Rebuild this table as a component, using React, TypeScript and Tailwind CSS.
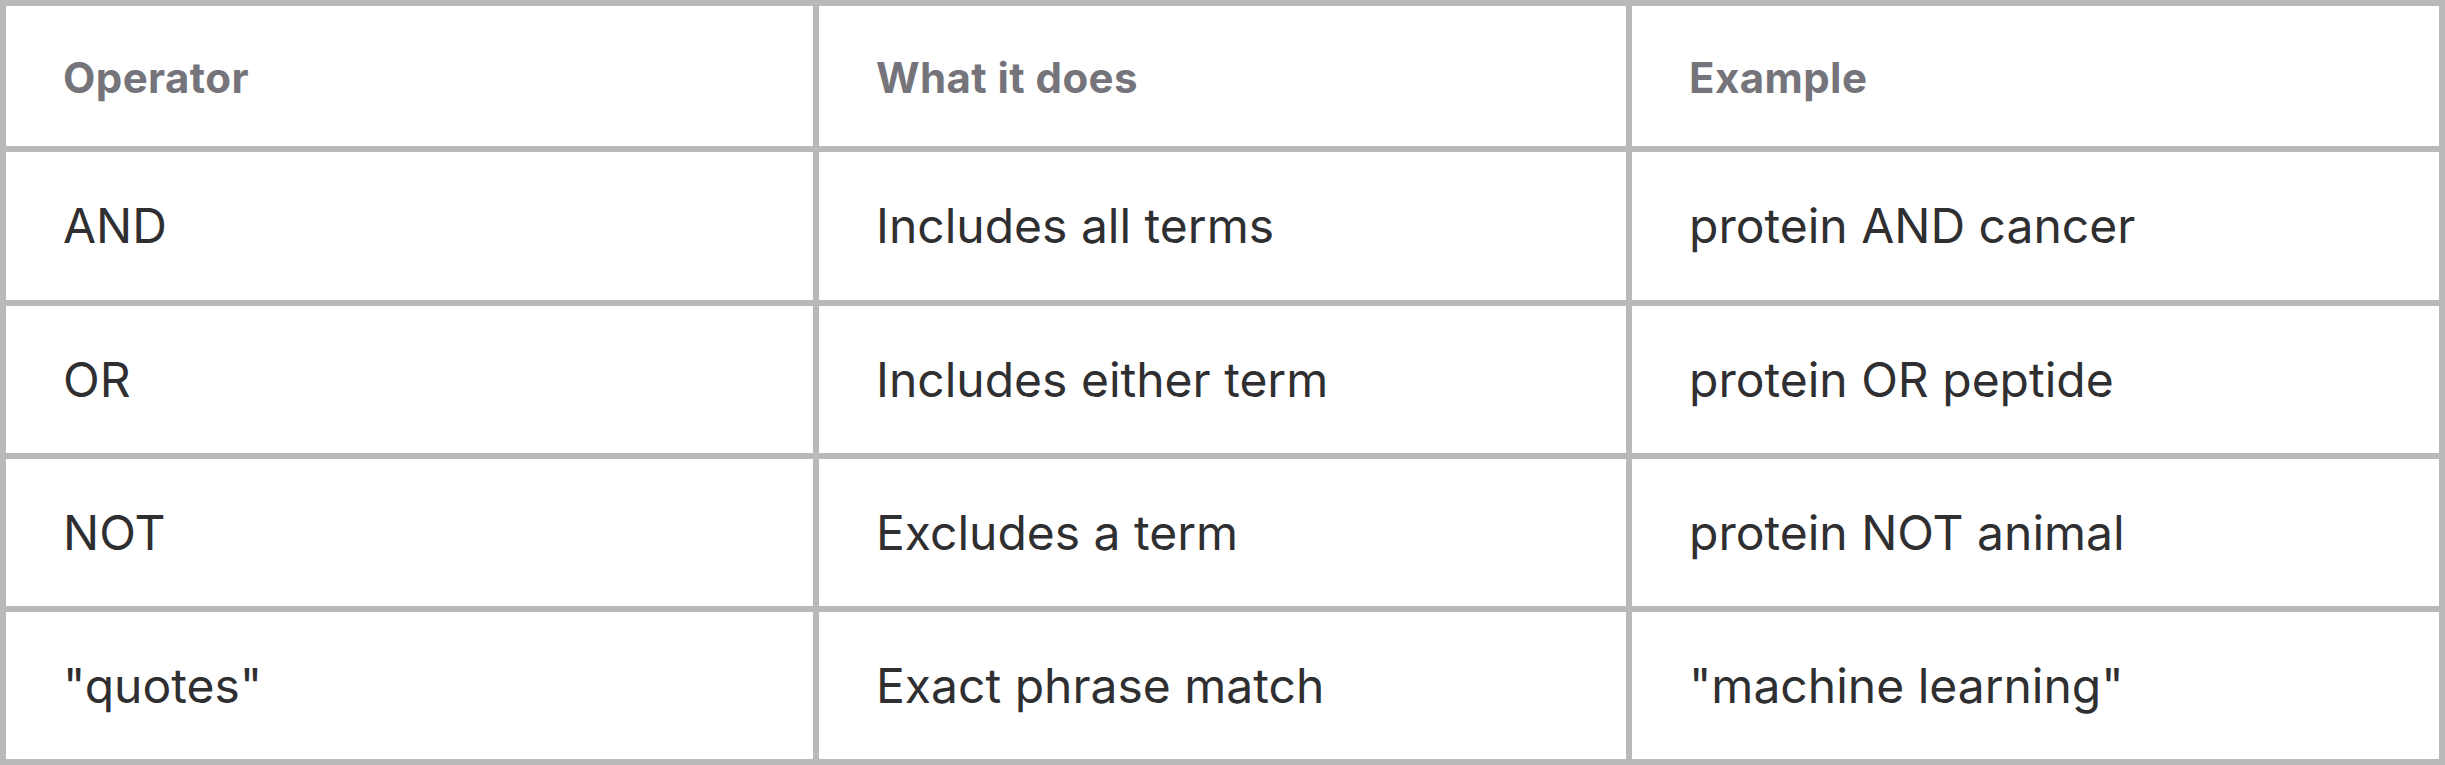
import React from "react";

const rows: [string, string, string][] = [
  ["AND", "Includes all terms", "protein AND cancer"],
  ["OR", "Includes either term", "protein OR peptide"],
  ["NOT", "Excludes a term", "protein NOT animal"],
  ['"quotes"', "Exact phrase match", '"machine learning"'],
];

export default function App() {
  return (
    <div
      className="w-[2445px] h-[765px] bg-white"
      style={{ fontFamily: "Inter, 'Noto Sans', sans-serif" }}
    >
      <div className="grid grid-cols-3 grid-rows-[140px_148px_147px_147px_147px] gap-[6px] p-[6px] bg-[#b9b8bb] w-full h-full">
        {["Operator", "What it does", "Example"].map((h) => (
          <div
            key={h}
            className="bg-white flex items-center pl-[57px] pt-[4px] text-[42px] leading-none font-bold tracking-[0.01em] text-[#75747a]"
          >
            {h}
          </div>
        ))}
        {rows.map((r, i) =>
          r.map((c, j) => (
            <div
              key={`${i}-${j}`}
              className="bg-white flex items-center pl-[57px] text-[48px] text-[#2f2f31]"
            >
              {c}
            </div>
          ))
        )}
      </div>
    </div>
  );
}
